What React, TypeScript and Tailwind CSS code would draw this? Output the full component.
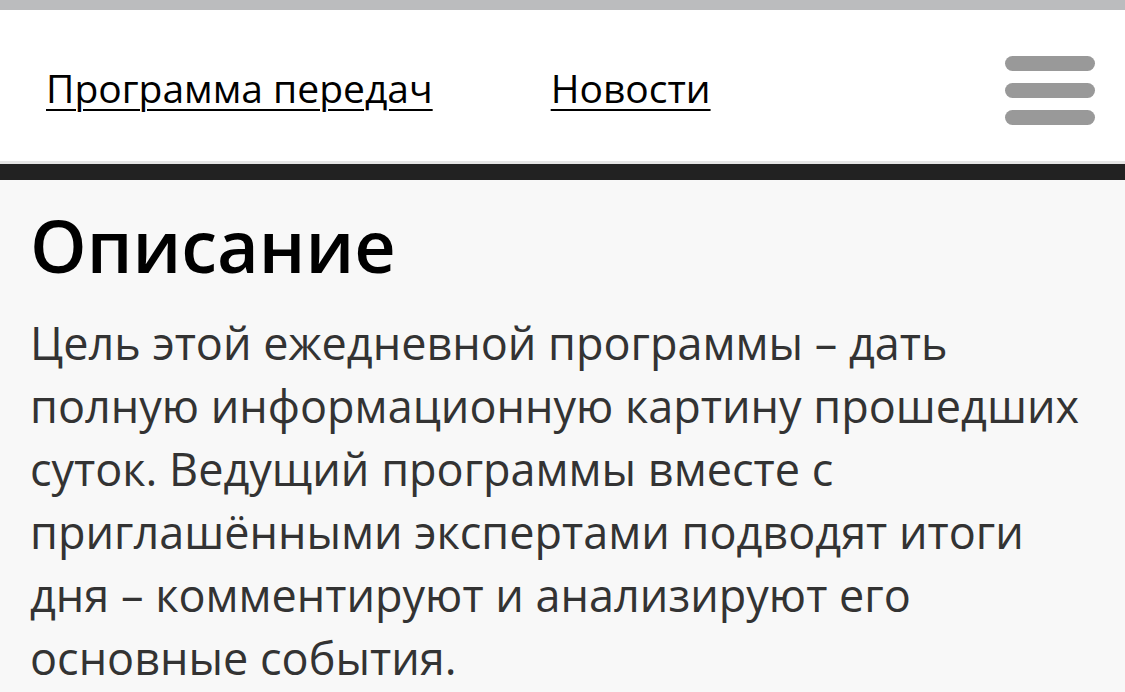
export default function App() {
  return (
    <div className="min-h-[692px] bg-[#f8f8f8] font-['Open_Sans',sans-serif]">
      <div className="h-[10px] bg-[#bbbcbe]" />
      <header className="flex h-[151px] items-center justify-between bg-white pl-[46px] pr-[30px] pt-[10px]">
        <nav className="-mt-[4px] flex items-center gap-[118px] text-[39px] text-black">
          <a href="#" className="underline decoration-2 underline-offset-[6px]">
            Программа передач
          </a>
          <a href="#" className="underline decoration-2 underline-offset-[6px]">
            Новости
          </a>
        </nav>
        <button className="flex w-[90px] flex-col gap-[12px]">
          <span className="h-[15px] rounded-full bg-[#999]" />
          <span className="h-[15px] rounded-full bg-[#999]" />
          <span className="h-[15px] rounded-full bg-[#999]" />
        </button>
      </header>
      <div className="h-[3px] bg-[#e5e5e5]" />
      <div className="h-[16px] bg-[#222]" />
      <main className="px-[30px] pt-[22px]">
        <h1 className="text-[72px] font-semibold leading-[1.2] text-black">Описание</h1>
        <p className="mt-[23px] text-[45px] leading-[63px] text-[#333]">
          Цель этой ежедневной программы – дать полную информационную картину прошедших суток.
          Ведущий программы вместе с приглашёнными экспертами подводят итоги дня – комментируют и
          анализируют его основные события.
        </p>
      </main>
    </div>
  );
}
